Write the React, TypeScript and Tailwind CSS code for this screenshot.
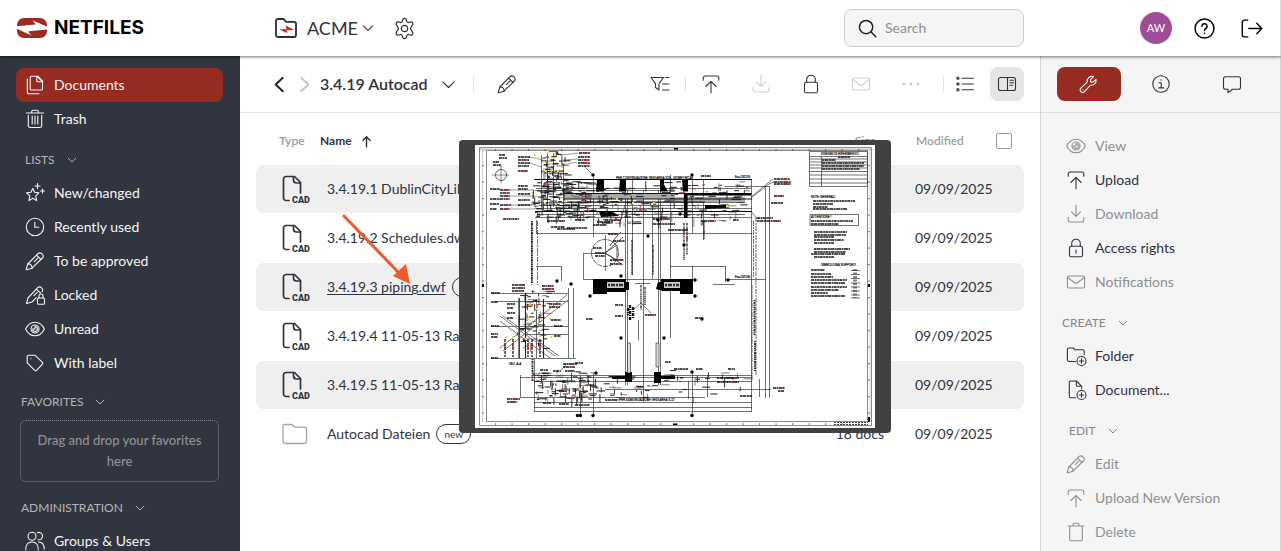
import React from 'react';

type IconName =
  | 'documents' | 'trash' | 'star' | 'clock' | 'pencil' | 'pencilLock' | 'eye' | 'tag' | 'users'
  | 'upload' | 'download' | 'lock' | 'lockKey' | 'mail' | 'dots' | 'list' | 'panel' | 'filter'
  | 'folderAdd' | 'docAdd' | 'bin' | 'wrench' | 'info' | 'chat' | 'gear' | 'search' | 'help'
  | 'logout' | 'down' | 'back' | 'forward' | 'arrowUp';

const pencilBody = (
  <>
    <path d="M13 2.600a2.600 2.600 0 0 1 3.700 0l.7.7a2.600 2.600 0 0 1 0 3.700L7 17.200l-5.200 1.600a.5.5 0 0 1-.6-.6L2.800 13z" />
    <path d="M11.600 4.200l4.300 4.300M2.900 12.900c2.400-.3 4.300 1.800 4.100 4.200M9.300 10.700l3.500-3.500" />
  </>
);

const eyeBody = (
  <>
    <path d="M.6 10C2.600 6 6 3.200 10 3.200S17.400 6 19.400 10c-2 4-5.400 6.800-9.400 6.800S2.600 14 .6 10z" />
    <circle cx="10" cy="10" r="4" />
    <path d="M10 7.600V10H7.600M7.600 10a2.400 2.400 0 1 0 2.400-2.400" />
  </>
);

const icons: Record<IconName, React.ReactNode> = {
  documents: (
    <>
      <path d="M6.500 1.200h6.300l4.700 4.800v7.700a1.300 1.300 0 0 1-1.300 1.300H6.500a1.300 1.300 0 0 1-1.300-1.300V2.500a1.300 1.300 0 0 1 1.300-1.300z" />
      <path d="M11.800 1.400v4.300a1 1 0 0 0 1 1h4.400M12.400 1.600l4.700 4.800M2.300 4v12.800a2 2 0 0 0 2 2H14" />
    </>
  ),
  trash: <path d="M1.500 4h17M6.700 4V2.500a1.300 1.300 0 0 1 1.300-1.300h4a1.300 1.300 0 0 1 1.300 1.300V4M3.300 6.200v10.500a1.800 1.800 0 0 0 1.800 1.800h9.800a1.800 1.800 0 0 0 1.800-1.800V6.200M7.200 7v8M10 7v8M12.800 7v8" />,
  bin: <path d="M2 4h16M7 4V2.500A1.300 1.300 0 0 1 8.300 1.200h3.400A1.300 1.300 0 0 1 13 2.500V4M3.700 4v13.200a1.600 1.600 0 0 0 1.600 1.600h9.400a1.600 1.600 0 0 0 1.600-1.600V4" />,
  star: (
    <>
      <path d="M7.800 5.500l1.800 3.800 4.300.6-3.100 2.900.8 4.800-3.800-2.300L4 17.600l.8-4.800L1.500 9.900l4.400-.6z" />
      <path d="M12.500 .5v5M10 3h5M17.500 6v4M15.500 8h4" />
    </>
  ),
  clock: <><circle cx="10" cy="10" r="8.700" /><path d="M9.800 5.200v5h4" /></>,
  pencil: pencilBody,
  pencilLock: (
    <>
      <path d="M11.300 12.700L7 17l-5.500 1.500L3 13 12.700 2.700a2.400 2.400 0 0 1 3.600 0 2.700 2.700 0 0 1 .8 4M11.500 4.300l4 3.700M9 10.600l3.200-3.200" />
      <rect x="12.500" y="13" width="7" height="6.200" rx="1" />
      <path d="M14 13v-2a2 2 0 0 1 4 0v2" />
    </>
  ),
  eye: eyeBody,
  tag: <><path d="M3.500 2.200h6.400l7.500 7.100a1.300 1.300 0 0 1 0 1.900l-5.800 6.200a1.300 1.300 0 0 1-1.900 0L2.200 9.900V3.500a1.300 1.300 0 0 1 1.300-1.300z" /><path d="M5.800 5.700h.2" /></>,
  users: (
    <>
      <circle cx="7" cy="5.300" r="4" />
      <path d="M.7 19c0-5.500 2.500-8 6.300-8s6.300 2.500 6.300 8M12.300 1.700a3.700 3.700 0 1 1 .8 7M13.500 11c3.500-.2 5.600 2.400 5.800 7" />
    </>
  ),
  upload: <path d="M2.200 6.300V4a2 2 0 0 1 2-2h11.600a2 2 0 0 1 2 2v2.300M10 18.700V8M4.900 12.500L10 7.400l5.100 5.100" />,
  download: <path d="M2.200 13.500V16a2 2 0 0 0 2 2h11.600a2 2 0 0 0 2-2v-2.500M10 1.300V12M5.500 7.900l4.500 4.500 4.500-4.500" />,
  lock: <><rect x="3.500" y="8.300" width="13" height="10.500" rx="1.600" /><path d="M5.700 8.300V5.500a4.300 4.300 0 0 1 8.600 0v2.800" /></>,
  lockKey: <><rect x="3.500" y="8.300" width="13" height="10.500" rx="1.600" /><path d="M5.700 8.300V5.500a4.300 4.300 0 0 1 8.600 0v2.800M10 12v3.200" /></>,
  mail: <><rect x="1.400" y="4" width="17.200" height="12" rx="1.500" /><path d="M1.800 5.500l6.700 5.200a2.400 2.400 0 0 0 3 0l6.700-5.200" /></>,
  dots: <g fill="currentColor" stroke="none"><circle cx="3" cy="10" r="1.500" /><circle cx="10" cy="10" r="1.500" /><circle cx="17" cy="10" r="1.500" /></g>,
  list: <path d="M7 4.200h11.500M7 10h11.500M7 15.800h11.500M2 3.300h1.800v1.800H2zM2 9.100h1.800v1.800H2zM2 14.900h1.800v1.800H2z" />,
  panel: <><rect x="1.500" y="3.500" width="17" height="13" rx="2" /><path d="M10.500 3.500v13M13 6.200h3.500M13 8.700h3.500M13 11.200h2.500" /></>,
  filter: <path d="M1 3.500h12.500L9 9.600V16l-3.500-2.500V9.600zM15.500 3.500H19M12.500 10H19M12.500 16H19" />,
  folderAdd: (
    <>
      <path d="M9.500 15.500H3A1.600 1.600 0 0 1 1.400 14V3.300A1.300 1.300 0 0 1 2.700 2h4.600l1.700 1.800h7.700a1.500 1.500 0 0 1 1.500 1.500v3.400" />
      <circle cx="15.500" cy="15" r="4.500" /><path d="M15.500 12.800v4.400M13.300 15h4.400" />
    </>
  ),
  docAdd: (
    <>
      <path d="M9.500 17.800H4.800a1.500 1.500 0 0 1-1.500-1.500V2.500A1.500 1.500 0 0 1 4.800 1h5.700l5.200 5.300v2.400M10.300 1.200v4a1 1 0 0 0 1 1h4.200" />
      <circle cx="15.500" cy="15" r="4.500" /><path d="M15.500 12.800v4.400M13.300 15h4.400" />
    </>
  ),
  wrench: <path d="M17.900 4.500l-3.100 3-2.500-.1-.2-2.600 3.200-3A5 5 0 0 0 8.700 7.500L2 13.700a2.500 2.500 0 0 0 0 3.800 2.500 2.500 0 0 0 3.800 0l6.300-6.800a5 5 0 0 0 5.800-6.200zM4 15.500h.2" />,
  info: <><circle cx="10" cy="10" r="8.200" /><path d="M8 8.700h2.200v5M7.700 13.900h5M9.900 5.900h.4" /></>,
  chat: <path d="M3.500 2.800h13a2 2 0 0 1 2 2v8.400a2 2 0 0 1-2 2h-6L6 18.500v-3.300H3.500a2 2 0 0 1-2-2V4.800a2 2 0 0 1 2-2z" />,
  gear: (
    <>
      <circle cx="10" cy="10" r="3" />
      <path d="M8.200 1.700a1.850 1.850 0 0 1 3.600 0l.3 1.300a1.700 1.700 0 0 0 2.200 1.200l1.300-.4a1.850 1.850 0 0 1 1.800 3.100l-.9 1.700a1.700 1.700 0 0 0 0 2.800l.9 1.700a1.850 1.850 0 0 1-1.800 3.100l-1.300-.4a1.700 1.700 0 0 0-2.200 1.200l-.3 1.300a1.850 1.850 0 0 1-3.600 0L7.900 17a1.700 1.700 0 0 0-2.200-1.200l-1.300.4a1.850 1.850 0 0 1-1.800-3.100l.9-1.700a1.700 1.700 0 0 0 0-2.800l-.9-1.700a1.850 1.850 0 0 1 1.800-3.100l1.300.4A1.700 1.700 0 0 0 7.900 3z" />
    </>
  ),
  search: <><circle cx="8.500" cy="8.500" r="7" /><path d="M13.500 13.500l5.300 5.300" /></>,
  help: <><circle cx="10" cy="10" r="9" /><path d="M7.600 7.800a2.400 2.400 0 1 1 3.500 2.200c-.8.4-1.100.8-1.100 1.900M10 14.400v.3" /></>,
  logout: <path d="M6.500 2H3.200a2 2 0 0 0-2 2v12a2 2 0 0 0 2 2h3.300M7.500 10h12M15 5l4.800 5-4.800 5" />,
  down: <path d="M2.500 6.500l7.500 7.500 7.500-7.500" />,
  back: <path d="M13.500 3L6 10l7.500 7" />,
  forward: <path d="M6.500 3l7.500 7-7.500 7" />,
  arrowUp: <path d="M10 18V3M4.500 8.500L10 2.500l5.500 6" />,
};

function Icon({ name, className = 'size-5', stroke = 1.1 }: { name: IconName; className?: string; stroke?: number }) {
  return (
    <svg
      viewBox="0 0 20 20"
      className={`shrink-0 overflow-visible ${className}`}
      fill="none"
      stroke="currentColor"
      strokeWidth={stroke}
      strokeLinecap="round"
      strokeLinejoin="round"
      aria-hidden="true"
    >
      {icons[name]}
    </svg>
  );
}

const lists: { icon: IconName; label: string }[] = [
  { icon: 'star', label: 'New/changed' },
  { icon: 'clock', label: 'Recently used' },
  { icon: 'pencil', label: 'To be approved' },
  { icon: 'pencilLock', label: 'Locked' },
  { icon: 'eye', label: 'Unread' },
  { icon: 'tag', label: 'With label' },
];

const files = [
  { name: '3.4.19.1 DublinCityLibrary.dwf', kind: 'cad' },
  { name: '3.4.19.2 Schedules.dwf', kind: 'cad' },
  { name: '3.4.19.3 piping.dwf', kind: 'cad', isNew: true, hovered: true },
  { name: '3.4.19.4 11-05-13 Rack.dwf', kind: 'cad' },
  { name: '3.4.19.5 11-05-13 Rack.dwf', kind: 'cad' },
  { name: 'Autocad Dateien', kind: 'folder', isNew: true, size: '18 docs' },
];

type Action = { icon: IconName; label: string; enabled?: boolean };

const viewActions: Action[] = [
  { icon: 'eye', label: 'View' },
  { icon: 'upload', label: 'Upload', enabled: true },
  { icon: 'download', label: 'Download' },
  { icon: 'lockKey', label: 'Access rights', enabled: true },
  { icon: 'mail', label: 'Notifications' },
];
const createActions: Action[] = [
  { icon: 'folderAdd', label: 'Folder', enabled: true },
  { icon: 'docAdd', label: 'Document...', enabled: true },
];
const editActions: Action[] = [
  { icon: 'pencil', label: 'Edit' },
  { icon: 'upload', label: 'Upload New Version' },
  { icon: 'bin', label: 'Delete' },
];

function NavItem({ icon, label, active }: { icon: IconName; label: string; active?: boolean }) {
  return (
    <a
      href="#"
      className={`mr-[17px] ml-4 flex h-[34px] items-center gap-[9px] rounded-lg pl-[9px] text-sm text-[#f4f4f5] ${active ? 'bg-[#962b21]' : ''}`}
    >
      <Icon name={icon} />
      {label}
    </a>
  );
}

function SectionHeading({ label, className }: { label: string; className: string }) {
  return (
    <button type="button" className={`flex items-center gap-3 text-xs uppercase ${className}`}>
      {label}
      <Icon name="down" className="size-[10px]" stroke={2} />
    </button>
  );
}

function ActionItem({ icon, label, enabled }: Action) {
  return (
    <button
      type="button"
      disabled={!enabled}
      className={`flex h-[34px] items-center gap-[9px] pl-[25px] text-sm ${enabled ? 'text-[#2f333f]' : 'text-[#8e9096]'}`}
    >
      <Icon name={icon} />
      {label}
    </button>
  );
}

function ToolButton({ icon, label, className = 'text-[#2f333f]' }: { icon: IconName; label: string; className?: string }) {
  return (
    <button type="button" aria-label={label} className={`flex size-[34px] items-center justify-center rounded-lg ${className}`}>
      <Icon name={icon} />
    </button>
  );
}

function CadIcon() {
  return (
    <svg viewBox="0 0 30 30" className="size-[30px] overflow-visible" fill="none" stroke="#2f333f" strokeWidth="1.700" strokeLinecap="round" strokeLinejoin="round">
      <path d="M7 26.500H4A2.500 2.500 0 0 1 1.500 24V5A2.500 2.500 0 0 1 4 2.500h8.500l6 6V19" />
      <path d="M11.500 2.800V6a3 3 0 0 0 3 3h3.800" />
      <text x="10" y="28.500" fontFamily="Roboto, sans-serif" fontWeight="900" fontSize="9" fill="#2f333f" stroke="none">CAD</text>
    </svg>
  );
}

function FolderIcon() {
  return (
    <svg viewBox="0 0 26 22" className="h-[22px] w-[26px]" fill="none" stroke="#a2a3a9" strokeWidth="1.300" strokeLinejoin="round">
      <path d="M3 1.500h7l2.700 2.700H22A2.500 2.500 0 0 1 24.500 6.700V18A2.500 2.500 0 0 1 22 20.500H3.500A2.500 2.500 0 0 1 1 18V3.500a2 2 0 0 1 2-2z" />
    </svg>
  );
}

// small deterministic generator for the dense annotation areas of the plan
function scatter(seed: number, count: number, x: number, y: number, w: number, h: number) {
  let s = seed;
  const next = () => {
    s = (s * 16807) % 2147483647;
    return s / 2147483647;
  };
  next();
  next();
  return Array.from({ length: count }, () => ({
    x: x + next() * w,
    y: y + next() * h,
    w: 2 + next() * 7,
    tall: next() > 0.7,
  }));
}

const clutter = [
  ...scatter(1117, 210, 56, 36, 58, 36),
  ...scatter(7121, 90, 110, 42, 55, 36),
  ...scatter(2939, 100, 166, 36, 106, 40),
  ...scatter(4703, 70, 66, 5, 24, 34),
  ...scatter(8311, 110, 58, 226, 58, 28),
  ...scatter(9733, 34, 115, 230, 70, 26),
  ...scatter(6121, 30, 184, 224, 88, 28),
  ...scatter(5303, 70, 42, 145, 30, 58),
];

// rows of lettering: x, y, width, accent at the end
const labels: [number, number, number, boolean?][] = [
  [24, 10, 6], [24, 13, 8], [18, 17, 6], [18, 20, 8],
  [43, 12, 12], [43, 15, 11, true], [43, 18, 12], [43, 21, 11], [43, 26, 10, true],
  [104, 8, 11, true], [103, 12, 12], [103, 15, 12, true], [103, 18, 12, true], [103, 21, 12],
  [15, 44, 10], [25, 45, 10, true], [25, 48, 10], [25, 51, 10, true], [15, 54, 10], [25, 54, 10],
  [15, 59, 9], [25, 60, 11, true], [15, 64, 7], [25, 64, 10, true], [43, 41, 10], [43, 44, 10], [43, 49, 12], [43, 55, 12], [43, 60, 12], [28, 74, 16],
  [76, 82, 14], [82, 84, 18], [118, 80, 14], [130, 75, 16, true], [100, 75, 10], [92, 83, 20], [122, 77, 16], [72, 76, 18, true],
  [299, 34, 16, true], [299, 37, 17, true], [299, 39, 17, true], [299, 51, 10, true], [296, 58, 12],
  [282, 73, 16, true], [282, 76, 24, true], [226, 31, 10], [226, 76, 15, true], [258, 75, 6],
  [178, 74, 17, true], [178, 79, 22], [193, 85, 20],
  [118, 103, 9], [120, 108, 10], [120, 111, 10], [133, 89, 10, true], [138, 96, 12], [135, 115, 14, true], [135, 119, 12],
  [37, 140, 13, true], [37, 143, 13, true], [37, 146, 12], [67, 141, 12, true], [67, 144, 12, true], [74, 159, 12, true], [74, 162, 11],
  [16, 148, 9], [16, 157, 7], [32, 159, 8], [32, 163, 6], [32, 168, 8], [32, 173, 6], [16, 181, 8], [76, 175, 10], [79, 181, 9], [79, 191, 7],
  [16, 189, 7], [16, 192, 7], [16, 213, 7], [111, 174, 7], [220, 173, 8], [170, 170, 11, true], [140, 160, 8], [140, 171, 8],
  [88, 219, 14, true], [88, 222, 12], [100, 218, 8], [78, 226, 8], [65, 225, 8], [90, 226, 10, true],
  [32, 254, 13, true], [32, 257, 10, true], [68, 258, 8], [84, 259, 10], [100, 260, 15], [130, 255, 12],
  [199, 224, 14], [221, 224, 7], [253, 224, 7], [242, 233, 22, true], [242, 237, 22, true], [265, 251, 12],
  [298, 243, 12, true], [303, 246, 6], [190, 217, 6],
  [347, 15, 14], [347, 18, 42], [347, 21, 42], [347, 24, 38], [363, 12, 12],
  [338, 56, 42], [338, 59, 20], [338, 62, 15], [338, 64, 34],
  [336, 76, 42], [336, 79, 28],
  [339, 87, 33], [339, 90, 32], [339, 92, 20], [339, 95, 30], [339, 98, 20],
  [339, 104, 36], [339, 107, 32], [336, 109, 34], [339, 112, 20],
  [336, 125, 14], [336, 129, 20], [336, 132, 22], [336, 135, 36], [336, 138, 34], [336, 142, 36], [336, 145, 28], [336, 148, 17], [336, 151, 34],
];

const hLines = [
  'M61 43.500H276M60 45.500H200M61 57.500H270M64 60.500H240M61 63.500H277M62 69.500H270M60 72.500H276M61 88.500H277',
  'M16 148.500H93M20 156.500H93M16 181.500H93M50 189.500H93M16 213.500H101M108 108.500H132M108 134.500H185M61 121.500H86M195 121.500H250M160 138.500H175',
  'M59 230.500H277M59 232.500H277M59 236.500H277M130 244.500H296M59 252.500H230M59 257.500H277M59 262.500H277M59 266.500H277M45 232.500H60M45 252.500H60M250 41.500H295M250 134.500H291M238 139.500H260',
].join('');
const vLines = [
  'M66.500 10V62M72.500 8V66M78.500 8V62M88.500 20V70M118.500 32V92M150.500 45V240M152.500 45V240M157.500 34V130M168.500 45V257M177.500 60V134M183.500 45V240M185.500 45V240M195.500 30V193M217.500 30V88M217.500 121V149M228.500 35V95M250.500 121V137M290.500 41V253M294.500 41V253M276.500 34V266',
  'M44.500 153V213M50.500 148V213M61.500 154V213M68.500 154V213M93.500 143V213M98.500 143V213M108.500 108V134M86.500 121V136M61.500 75V88M45.500 230V252M59.500 214V266M118.500 228V272M105.500 230V270M217.500 226V270M213.500 236V254M232.500 230V252M130.500 90V126M163.500 175V195M284.500 234V252',
].join('');

const dots: [number, number][] = [
  [118, 30], [217, 30], [146, 131], [82, 136], [96, 139], [115, 151], [146, 193], [189, 193], [118, 270.5],
  [102.5, 270.5], [105.5, 270.5], [217, 270.5], [220, 135], [253, 135], [220, 151], [227, 174], [217, 227],
  [205, 69], [209, 100], [183, 75], [173, 91], [121, 228],
];
const yellow: [number, number][] = [
  [59, 9], [60, 12], [68, 16], [75, 18], [79, 9], [72, 7], [78, 12], [86, 21], [82, 25], [76, 24], [68, 24], [60, 51], [69, 57], [80, 58], [141, 53], [157, 57], [178, 57], [251, 60], [89, 55],
  [54, 158], [61, 163], [72, 165], [30, 191], [37, 191], [52, 173], [57, 177], [66, 173], [50, 193], [75, 191], [74, 173], [104, 243], [64, 190],
];

function PlanDrawing() {
  return (
    <svg viewBox="0 0 400 283" className="block w-full bg-white" role="img" aria-label="3.4.19.3 piping.dwf">
      <g fill="none" stroke="#8a8a8a" strokeWidth="1">
        <path d="M5 3.500h391v2H5z" fill="#c8c8c8" stroke="none" />
        <path d="M4.500 2.500h392v278H4.500zM11.500 5.500h381v271h-381z" />
        <path d="M7.500 4.500v273M395 4v273" stroke="#cfcfcf" />
      </g>
      <path d="M20 5h370M20 279h370M8 20v250M394 20v250" stroke="#222" strokeWidth="1" strokeDasharray="1.200 15.300" />
      <path d="M199 3h4v1.500h-4zM198 278.500h4v1.500h-4zM7 139h2v3h-2zM393 139h2v3h-2z" />

      <path d={hLines} stroke="#333" strokeWidth=".7" fill="none" />
      <path d={vLines} stroke="#333" strokeWidth=".7" fill="none" />
      <path d="M59 34.500H277M60 66.500H277" stroke="#000" strokeWidth="1" />
      <path d="M90 48h110v6H90zM190 52h80v5h-80z" fill="#aaa" />
      <path d="M88 48.500H277M88 54H277M92 57H230" stroke="#111" strokeWidth="1" />
      <path d="M210 49.500H276M210 48V73M211.500 48V73" stroke="#000" strokeWidth="2.200" />
      <path d="M56.500 76V140M62.500 76V140M278.500 76V132M277 140V235M281 72V230" stroke="#444" strokeWidth=".8" strokeDasharray="5 1 2 1" />
      <path d="M279.500 155V190M280 196V226M57 76V138M57.500 214V236" stroke="#333" strokeWidth="1.900" strokeDasharray="1.200 .7 2 .6" />

      {/* structural joints and beams */}
      <path d="M122 34.500h7v12h-8zM145 34.500h6v12h-7zM185 34.500h4v5l4 7h-8zM207 34.500h6v12h-5zM124 66l14 1 6 4-18 1zM230 60h21v3l-21 1z" />
      <path d="M118 134h33v3h3v8h-3v2h-19v2h-14zM183 137h3v-3h32v15h-13v-3h-17l-7-2z" />
      <path d="M132 137h17v6h-17zM189 137h16v6h-16z" fill="#ccc" />
      <path d="M133 140h15M190 140h14" stroke="#333" strokeWidth="2.400" strokeDasharray="2 1 4 1" />
      <path d="M137 231h13v-4h7v10h-7v-3h-13zM179 227h7v4h14v3h-14v4h-7z" />
      <path d="M152.500 198h3v30h-3zM181 198h3v24h-3z" fill="#ddd" stroke="#222" strokeWidth=".6" />
      <path d="M155 160V176M158 162V174M153 163V170" stroke="#111" strokeWidth="2.400" strokeDasharray="3 1 1 1" />
      <path d="M166 140V165M170 142V160M209 78V115M212 78V110M229 76V94M157 95V130M178 100V130" stroke="#222" strokeWidth="1.300" strokeDasharray="2 .6 1 .6" />
      <path d="M157 104v3M178 104v3M209 84v3M212 92v3M229 85v2" stroke="#c01f2e" strokeWidth="1.400" />

      {/* survey mark and detail circle */}
      <g fill="none" stroke="#333" strokeWidth=".8">
        <circle cx="26" cy="30" r="5.500" />
        <path d="M17 30H34M26 20V38" strokeWidth=".6" />
        <circle cx="130" cy="108" r="13.500" strokeDasharray="5 1" />
        <path d="M130 108L148 92M130 108L148 120M130 108L142 100v15zM135 101l6-9 5-5" />
      </g>

      {/* lower-left section */}
      <path d="M92 150L25 203M93 155L28 206M25 171L80 211M28 171L84 211M25 176L75 213" stroke="#777" strokeWidth="1" fill="none" />
      <path d="M44 153V213M50.500 148V213M68.500 154V213" stroke="#222" strokeWidth="1.100" />
      <path d="M30 194V212M38 194V212M53 194V212M57 194V212M65 194V212" stroke="#222" strokeWidth="1.400" strokeDasharray="3 1" />
      <path d="M30 199v4M38 199v4M53 201v3M57 199v4M65 199v4" stroke="#c01f2e" strokeWidth="1.500" />
      <path d="M158 165L166 158 176 168M86 225L92 219M118 30L110 22M276 53L294 39 299 37M276 52L298 34M276 66L282 74M145 78L150 60" stroke="#444" strokeWidth=".7" fill="none" />
      <path d="M87 10L103 8M88 15L103 14M88 20L102 17M55 12L68 15M55 18L66 22M35 45H60M35 51H60M35 60H58M35 64H60" stroke="#555" strokeWidth=".6" />

      {clutter.map((m, i) => (
        <rect
          key={i}
          x={m.x}
          y={m.y}
          width={m.tall ? 1 : m.w}
          height={m.tall ? m.w : 1.1}
          fill={i % 23 === 0 ? '#b5202c' : '#1c1c1c'}
          opacity={i % 3 === 0 ? 0.5 : 0.9}
        />
      ))}
      {labels.map(([x, y, w, accent], i) => (
        <g key={i}>
          <path d={`M${x} ${y}h${w}`} stroke="#151515" strokeWidth="1.500" strokeDasharray={i % 2 ? '3 .5 1.8 .4' : '2 .4 4 .5'} />
          {accent && <path d={`M${x + w - 6} ${y}h3`} stroke="#c01f2e" strokeWidth="1.700" />}
        </g>
      ))}
      {dots.map(([x, y]) => <circle key={`${x}-${y}`} cx={x} cy={y} r="1.700" />)}
      {yellow.map(([x, y]) => <rect key={`${x}-${y}`} x={x} y={y} width="2" height="2" fill="#e8e03a" />)}

      {/* title block and notes */}
      <g fill="none" stroke="#333" strokeWidth=".7">
        <path d="M334.500 6.500h58v35h-58zM334.500 11.500h58M334.500 14h58M334.500 17h58M334.500 20h58M334.500 23h58M334.500 26.500h58M334.500 30h58M334.500 34h58M334.500 38h58M346.500 11.500v30" />
        <path d="M335 69.500h48.500v11H335z" />
        <path d="M376 125.500h9M376 129.500h9M376 133.500h9M376 138h9M376 142h9M376 146h9M376 150h9M376 153h9" />
        <path d="M379 124V153M381 124V153" strokeWidth="1.200" strokeDasharray="2 1.500" />
      </g>
      <g fontFamily="'Liberation Sans', sans-serif" fontSize="3" fill="#000" stroke="#000" strokeWidth=".15">
        <text x="346" y="10">DISEGNI DI RIFERIMENTO</text>
        <text x="336" y="53">NOTE GENERALI</text>
        <text x="336" y="73">ATTENZIONE !</text>
        <text x="346" y="121">SIMBOLOGIA SUPPORTI</text>
        <text x="141" y="33.500">PER CONTINUAZIONE VEDI AREA S13 - ISOMETRICA</text>
        <text x="144" y="255.500">PER CONTINUAZIONE VEDI AREA S-12</text>
        <text x="34" y="220">SEZ. A-A</text>
        <text x="260" y="33">E=+101110</text>
        <text x="260" y="133">E=+101100</text>
      </g>
      <path d="M359 277.500h34M359 279.500h34" stroke="#444" strokeWidth="1" strokeDasharray="2 1" />
      <path d="M393 272h2v5h-2z" />
    </svg>
  );
}

function Header() {
  return (
    <header className="relative z-20 flex h-14 shrink-0 items-center border-r border-[#dcdcdc] bg-white shadow-[0_1px_3px_rgba(0,0,0,0.55)]">
      <div className="flex w-60 shrink-0 items-center gap-[7px] pl-[17px]">
        <svg viewBox="0 0 30 20" className="h-5 w-[30px]" aria-hidden="true">
          <rect width="30" height="20" rx="7" fill="#9b2c22" />
          <path d="M0 8.200L18.500 6.600Q18 4 15 2.200L30 8.600V11.400L11.500 13.200Q12 16 15 17.800L0 10.800z" fill="#fff" />
        </svg>
        <span className="font-['Inter'] text-[19px] leading-5 font-bold text-black">NETFILES</span>
      </div>
      <div className="flex flex-1 items-center pr-4 pl-[35px] text-[#2f333f]">
        <svg viewBox="0 0 22 20" className="h-5 w-[22px]" fill="none" aria-hidden="true">
          <path d="M3 1h5.500l2.500 2.800h8a2 2 0 0 1 2 2V17a2 2 0 0 1-2 2H3a2 2 0 0 1-2-2V3a2 2 0 0 1 2-2z" stroke="#2a2e3b" strokeWidth="1.800" />
          <path d="M4 11.300h7.500l-.8-3.800 7.300 3.800v1h-6.500l.9 3z" fill="#b5301f" />
        </svg>
        <button type="button" className="ml-[10px] flex items-center gap-1 text-lg">
          ACME
          <Icon name="down" className="size-3" stroke={1.700} />
        </button>
        <button type="button" aria-label="Settings" className="ml-5">
          <Icon name="gear" className="size-[21px]" stroke={1.200} />
        </button>
        <label className="ml-auto flex h-[38px] w-[180px] items-center gap-2 rounded-lg border border-[#cfcfcf] bg-[#f5f5f5] pl-[13px]">
          <Icon name="search" className="size-[19px] text-[#1c1d22]" stroke={1.500} />
          <input type="search" aria-label="Search" placeholder="Search" className="w-full min-w-0 bg-transparent text-sm outline-none placeholder:text-[#8f9095]" />
        </label>
      </div>
      <div className="flex w-60 shrink-0 items-center justify-end gap-[22px] pr-[18px] text-black">
        <button type="button" className="size-8 rounded-full bg-[#9f4d97] text-[11px] text-white">AW</button>
        <button type="button" aria-label="Help"><Icon name="help" className="size-[21px]" stroke={1.400} /></button>
        <button type="button" aria-label="Log out" className="ml-1"><Icon name="logout" className="size-[21px]" stroke={1.300} /></button>
      </div>
    </header>
  );
}

function Sidebar() {
  return (
    <aside className="w-60 shrink-0 overflow-hidden bg-[#31353f] pt-3">
      <nav>
        <NavItem icon="documents" label="Documents" active />
        <NavItem icon="trash" label="Trash" />
        <SectionHeading label="Lists" className="mt-2 h-8 pl-[25px] text-[#b3b5ba]" />
        {lists.map((item) => <NavItem key={item.label} {...item} />)}
        <SectionHeading label="Favorites" className="mt-1 h-9 pl-[21px] text-[#b3b5ba]" />
        <p className="mr-[21px] ml-5 rounded-md border border-dotted border-[#85878d] px-4 py-[9px] text-center text-[13px] leading-[21px] font-medium text-[#8f9197]">
          Drag and drop your favorites here
        </p>
        <SectionHeading label="Administration" className="mt-[10px] h-8 pl-[21px] text-[#b3b5ba]" />
        <NavItem icon="users" label="Groups & Users" />
      </nav>
    </aside>
  );
}

function Toolbar() {
  return (
    <div className="flex h-[57px] shrink-0 items-center border-b border-[#e3e3e5] px-4">
      <button type="button" aria-label="Back" className="ml-[14px] text-[#1f222c]"><Icon name="back" className="size-[19px]" stroke={2.100} /></button>
      <button type="button" aria-label="Forward" className="ml-[6px] text-[#c4c5c9]"><Icon name="forward" className="size-[19px]" stroke={2.100} /></button>
      <button type="button" className="ml-[6px] flex items-center gap-[13px] text-base font-semibold text-[#2f333f]">
        3.4.19 Autocad
        <Icon name="down" className="size-[15px]" stroke={1.500} />
      </button>
      <span className="ml-[17px] h-4 w-px bg-[#e0e0e2]" />
      <div className="ml-4"><ToolButton icon="pencil" label="Rename" /></div>
      <div className="ml-auto flex items-center gap-2">
        <ToolButton icon="filter" label="Filter" />
        <span className="h-4 w-px bg-[#e0e0e2]" />
        <div className="flex gap-4">
          <ToolButton icon="upload" label="Upload" />
          <ToolButton icon="download" label="Download" className="text-[#d0d1d3]" />
          <ToolButton icon="lock" label="Access rights" />
          <ToolButton icon="mail" label="Notifications" className="text-[#d0d1d3]" />
          <ToolButton icon="dots" label="More" className="text-[#cbccce]" />
        </div>
      </div>
      <span className="ml-[15px] h-4 w-px bg-[#e0e0e2]" />
      <div className="ml-1 flex gap-2">
        <ToolButton icon="list" label="List view" />
        <ToolButton icon="panel" label="Side panel" className="bg-[#e5e5e5] text-[#2f333f]" />
      </div>
    </div>
  );
}

function FileTable() {
  return (
    <table className="w-full table-fixed border-separate border-spacing-x-0 border-spacing-y-px text-left text-sm text-[#2f333f]">
      <colgroup>
        <col className="w-16" />
        <col />
        <col className="w-20" />
        <col className="w-[100px]" />
        <col className="w-10" />
      </colgroup>
      <thead className="text-xs text-[#9a9ba1]">
        <tr className="h-[46px]">
          <th className="pl-[23px] font-semibold">Type</th>
          <th className="font-bold text-[#2f333f]">
            <button type="button" className="flex items-center gap-2">
              Name
              <Icon name="arrowUp" className="size-[13px]" stroke={2.200} />
            </button>
          </th>
          <th className="pr-2 text-right font-semibold">Size</th>
          <th className="pl-8 font-semibold">Modified</th>
          <th className="text-center">
            <input type="checkbox" aria-label="Select all" className="mx-auto block size-4 appearance-none rounded-[2px] border border-[#9a9ba1] bg-white" />
          </th>
        </tr>
      </thead>
      <tbody>
        {files.map((file, i) => (
          <tr key={file.name} className={`h-12 ${i % 2 === 0 && file.kind === 'cad' ? 'bg-[#efefef]' : ''}`}>
            <td className="rounded-l-lg pl-[26px]">{file.kind === 'cad' ? <CadIcon /> : <FolderIcon />}</td>
            <td className="pl-[7px]">
              <div className="flex items-center gap-[6px] whitespace-nowrap">
                <a href="#" className={file.hovered ? 'underline underline-offset-2' : ''}>{file.name}</a>
                {file.isNew && <span className="rounded-full border border-[#2f333f] px-[7px] text-[10px] leading-[18px]">new</span>}
              </div>
            </td>
            <td className="text-right whitespace-nowrap">{file.size}</td>
            <td colSpan={2} className="rounded-r-lg pl-[31px]">09/09/2025</td>
          </tr>
        ))}
      </tbody>
    </table>
  );
}

function ActionPanel() {
  return (
    <aside className="w-[241px] shrink-0 overflow-hidden border-x border-[#d6d6d8] bg-[#f5f5f5]">
      <div className="flex h-[57px] items-center gap-2 border-b border-[#dededf] px-4 text-[#2f333f]">
        <button type="button" aria-label="Actions" className="flex h-[34px] flex-1 items-center justify-center rounded-lg bg-[#962b21] text-white"><Icon name="wrench" className="size-[19px]" /></button>
        <button type="button" aria-label="Info" className="flex h-[34px] flex-1 items-center justify-center"><Icon name="info" /></button>
        <button type="button" aria-label="Comments" className="flex h-[34px] flex-1 items-center justify-center"><Icon name="chat" /></button>
      </div>
      <div className="flex flex-col pt-4">
        {viewActions.map((a) => <ActionItem key={a.label} {...a} />)}
        <SectionHeading label="Create" className="mt-2 h-8 pl-[21px] text-[#85878e]" />
        {createActions.map((a) => <ActionItem key={a.label} {...a} />)}
        <SectionHeading label="Edit" className="mt-2 h-8 pl-7 text-[#85878e]" />
        {editActions.map((a) => <ActionItem key={a.label} {...a} />)}
      </div>
    </aside>
  );
}

export default function App() {
  return (
    <div className="flex h-screen flex-col overflow-hidden bg-white font-['Lato',sans-serif]">
      <Header />
      <div className="flex min-h-0 flex-1">
        <Sidebar />
        <main className="relative flex min-w-0 flex-1 flex-col">
          <Toolbar />
          <div className="px-4 pt-1">
            <FileTable />
          </div>

          {/* Pointer to the hovered file */}
          <svg viewBox="0 0 72 74" className="absolute top-[157px] left-[101px] z-10 h-[74px] w-[72px]" aria-hidden="true">
            <path d="M3 3L58 60" stroke="#f1582b" strokeWidth="3" strokeLinecap="round" />
            <path d="M52 63L65 51 69 71z" fill="#f1582b" />
          </svg>

          {/* Hover preview */}
          <div className="absolute top-[84px] left-[219px] w-[432px] rounded bg-[#414141] px-4 py-[5px]">
            <PlanDrawing />
          </div>
        </main>
        <ActionPanel />
      </div>
    </div>
  );
}
